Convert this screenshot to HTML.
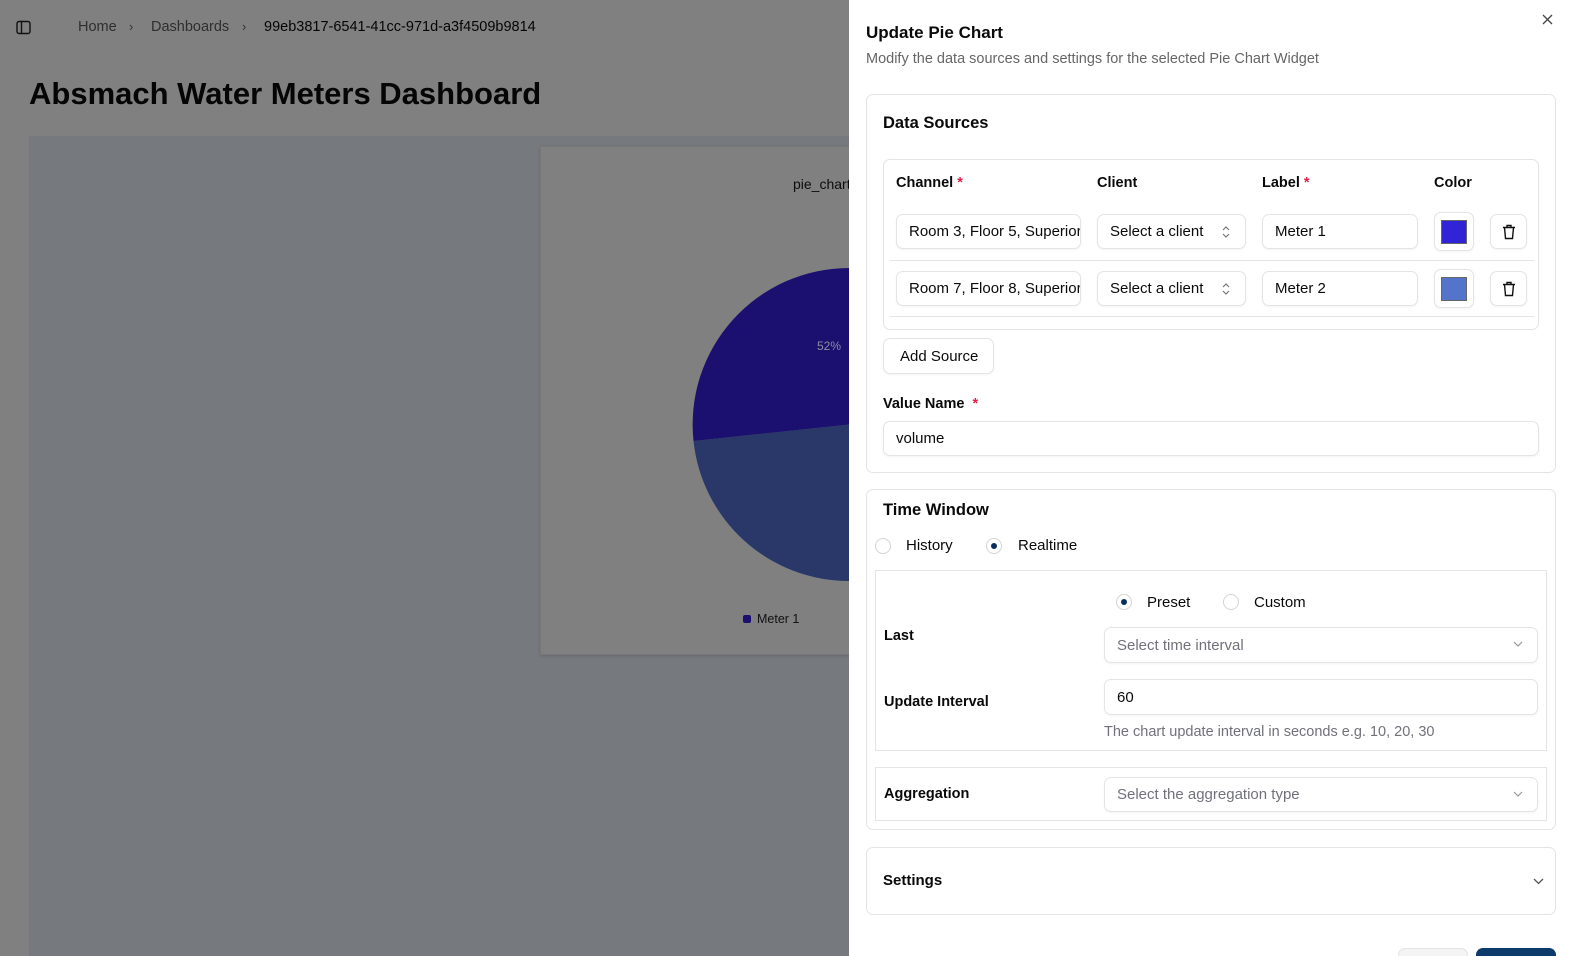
<!DOCTYPE html>
<html><head><meta charset="utf-8"><style>
*{box-sizing:border-box;margin:0;padding:0}
html,body{width:1572px;height:956px;overflow:hidden}
body{position:relative;background:#808080;font-family:"Liberation Sans",Arial,sans-serif;color:#0a0a0a}
.a{position:absolute}
.t{position:absolute;white-space:nowrap;line-height:1}
.box{position:absolute;border:1px solid #e4e4e7;border-radius:7px;background:#fff}
.inp{position:absolute;border:1px solid #e4e4e7;border-radius:7px;background:#fff;box-shadow:0 1px 2px rgba(0,0,0,.05);font-size:15px;padding-left:12px;display:flex;align-items:center;white-space:nowrap;overflow:hidden}
.b{font-weight:bold}
.req{color:#e11d48}
.radio{position:absolute;width:16px;height:16px;border:1px solid #d4d4d8;border-radius:50%;background:#fff}
.radio.on::after{content:"";position:absolute;left:4px;top:4px;width:6px;height:6px;border-radius:50%;background:#0b2f5c}
.ph{color:#71717a}
.chev{position:absolute;right:14px;top:50%;margin-top:-4px}
</style></head><body>
<svg class="a" style="left:16px;top:20px" width="15" height="15" viewBox="0 0 15 15"><rect x="1" y="1.5" width="13" height="12" rx="2" fill="none" stroke="#111" stroke-width="1.4"/><line x1="5.5" y1="1.5" x2="5.5" y2="13.5" stroke="#111" stroke-width="1.4"/></svg>
<div class="t" style="left:78px;top:20px;font-size:14.5px;color:#2e2e2e">Home</div>
<div class="t" style="left:129px;top:20px;font-size:13px;color:#333">›</div>
<div class="t" style="left:151px;top:20px;font-size:14.5px;color:#2e2e2e">Dashboards</div>
<div class="t" style="left:242px;top:20px;font-size:13px;color:#333">›</div>
<div class="t" style="left:264px;top:20px;font-size:14.5px;color:#050505">99eb3817-6541-41cc-971d-a3f4509b9814</div>
<div class="t b" style="left:29px;top:78px;font-size:31px;color:#050505">Absmach Water Meters Dashboard</div>
<div class="a" style="left:29px;top:136px;width:820px;height:820px;background:#767a7e"></div>
<div class="a" style="left:540px;top:146px;width:320px;height:509px;background:#808080;border:1px solid #787878;box-shadow:0 1px 3px rgba(0,0,0,.15)"></div>
<div class="t" style="left:793px;top:177px;font-size:14px;color:#0d0d0d">pie_chart</div>
<svg class="a" style="left:680px;top:255px" width="180" height="340" viewBox="680 255 180 340">
<path d="M849.5 424.5 L693.5 441 A156.5 156.5 0 0 0 849.5 581 Z" fill="#293868"/>
<path d="M849.5 424.5 L693.5 441 A156.5 156.5 0 0 1 849.5 268 Z" fill="#1b1070"/>
</svg>
<div class="t" style="left:817px;top:340px;font-size:12px;color:#8c8ca0">52%</div>
<div class="a" style="left:743px;top:615px;width:8px;height:8px;border-radius:2px;background:#1b1070"></div>
<div class="t" style="left:757px;top:613px;font-size:12.5px;color:#111">Meter 1</div>

<div class="a" style="left:849px;top:0;width:723px;height:956px;background:#fff"></div>
<svg class="a" style="left:1542px;top:14px" width="11" height="11" viewBox="0 0 11 11"><path d="M1 1L10 10M10 1L1 10" stroke="#444" stroke-width="1.3"/></svg>
<div class="t b" style="left:866px;top:24px;font-size:17px">Update Pie Chart</div>
<div class="t" style="left:866px;top:52px;font-size:14.5px;color:#666">Modify the data sources and settings for the selected Pie Chart Widget</div>

<div class="box" style="left:866px;top:94px;width:690px;height:379px"></div>
<div class="t b" style="left:883px;top:115px;font-size:16.5px">Data Sources</div>
<div class="box" style="left:883px;top:159px;width:656px;height:171px"></div>
<div class="t b" style="left:896px;top:176px;font-size:14.5px">Channel <span class="req">*</span></div>
<div class="t b" style="left:1097px;top:176px;font-size:14.5px">Client</div>
<div class="t b" style="left:1262px;top:176px;font-size:14.5px">Label <span class="req">*</span></div>
<div class="t b" style="left:1434px;top:176px;font-size:14.5px">Color</div>

<div class="inp" style="left:896px;top:214px;width:185px;height:35px">Room 3, Floor 5, Superior</div>
<div class="inp" style="left:1097px;top:214px;width:149px;height:35px">Select a client<svg class="a" style="left:124px;top:10px" width="8" height="14" viewBox="0 0 8 14"><path d="M1 5L4 2L7 5M1 9L4 12L7 9" fill="none" stroke="#777" stroke-width="1.2"/></svg></div>
<div class="inp" style="left:1262px;top:214px;width:156px;height:35px">Meter 1</div>
<div class="inp" style="left:1434px;top:212px;width:40px;height:39px;padding:0"><div style="margin:auto;width:26px;height:24px;background:#3024d6;border:1px solid #666"></div></div>
<div class="inp" style="left:1490px;top:214px;width:37px;height:35px;padding:0;justify-content:center"><svg width="14" height="16" viewBox="0 0 14 16"><path d="M1 3.5h12M5 3.5V1.5h4v2M2.5 3.5l1 11h7l1-11" fill="none" stroke="#111" stroke-width="1.4"/></svg></div>
<div class="a" style="left:890px;top:260px;width:644px;height:1px;background:#e4e4e7"></div>
<div class="inp" style="left:896px;top:271px;width:185px;height:35px">Room 7, Floor 8, Superior</div>
<div class="inp" style="left:1097px;top:271px;width:149px;height:35px">Select a client<svg class="a" style="left:124px;top:10px" width="8" height="14" viewBox="0 0 8 14"><path d="M1 5L4 2L7 5M1 9L4 12L7 9" fill="none" stroke="#777" stroke-width="1.2"/></svg></div>
<div class="inp" style="left:1262px;top:271px;width:156px;height:35px">Meter 2</div>
<div class="inp" style="left:1434px;top:269px;width:40px;height:39px;padding:0"><div style="margin:auto;width:26px;height:24px;background:#5474cc;border:1px solid #666"></div></div>
<div class="inp" style="left:1490px;top:271px;width:37px;height:35px;padding:0;justify-content:center"><svg width="14" height="16" viewBox="0 0 14 16"><path d="M1 3.5h12M5 3.5V1.5h4v2M2.5 3.5l1 11h7l1-11" fill="none" stroke="#111" stroke-width="1.4"/></svg></div>
<div class="a" style="left:890px;top:316px;width:644px;height:1px;background:#e4e4e7"></div>

<div class="inp" style="left:883px;top:338px;width:111px;height:36px;padding-left:16px">Add Source</div>
<div class="t b" style="left:883px;top:397px;font-size:14.5px">Value Name&nbsp; <span class="req">*</span></div>
<div class="inp" style="left:883px;top:421px;width:656px;height:35px">volume</div>

<div class="box" style="left:866px;top:489px;width:690px;height:341px"></div>
<div class="t b" style="left:883px;top:502px;font-size:16.5px">Time Window</div>
<div class="radio" style="left:875px;top:538px"></div>
<div class="t" style="left:906px;top:538px;font-size:15px">History</div>
<div class="radio on" style="left:986px;top:538px"></div>
<div class="t" style="left:1018px;top:538px;font-size:15px">Realtime</div>
<div class="a" style="left:875px;top:570px;width:672px;height:181px;border:1px solid #e4e4e7"></div>
<div class="radio on" style="left:1116px;top:594px"></div>
<div class="t" style="left:1147px;top:595px;font-size:15px">Preset</div>
<div class="radio" style="left:1223px;top:594px"></div>
<div class="t" style="left:1254px;top:595px;font-size:15px">Custom</div>
<div class="t b" style="left:884px;top:629px;font-size:14.5px">Last</div>
<div class="inp ph" style="left:1104px;top:627px;width:434px;height:36px">Select time interval<svg class="chev" width="10" height="6" viewBox="0 0 10 6"><path d="M1 1L5 5L9 1" fill="none" stroke="#999" stroke-width="1.2"/></svg></div>
<div class="t b" style="left:884px;top:695px;font-size:14.5px">Update Interval</div>
<div class="inp" style="left:1104px;top:679px;width:434px;height:36px">60</div>
<div class="t" style="left:1104px;top:725px;font-size:14.5px;color:#71717a">The chart update interval in seconds e.g. 10, 20, 30</div>
<div class="a" style="left:875px;top:767px;width:672px;height:54px;border:1px solid #e4e4e7"></div>
<div class="t b" style="left:884px;top:787px;font-size:14.5px">Aggregation</div>
<div class="inp ph" style="left:1104px;top:777px;width:434px;height:35px">Select the aggregation type<svg class="chev" width="10" height="6" viewBox="0 0 10 6"><path d="M1 1L5 5L9 1" fill="none" stroke="#999" stroke-width="1.2"/></svg></div>

<div class="box" style="left:866px;top:847px;width:690px;height:68px"></div>
<div class="t b" style="left:883px;top:873px;font-size:15px">Settings</div>
<svg class="a" style="left:1533px;top:878px" width="11" height="7" viewBox="0 0 11 7"><path d="M1 1L5.5 5.5L10 1" fill="none" stroke="#555" stroke-width="1.3"/></svg>

<div class="a" style="left:1398px;top:948px;width:70px;height:20px;border-radius:7px;background:#f4f4f5;border:1px solid #e4e4e7"></div>
<div class="a" style="left:1476px;top:948px;width:80px;height:20px;border-radius:7px;background:#0b3a6b"></div>
</body></html>
